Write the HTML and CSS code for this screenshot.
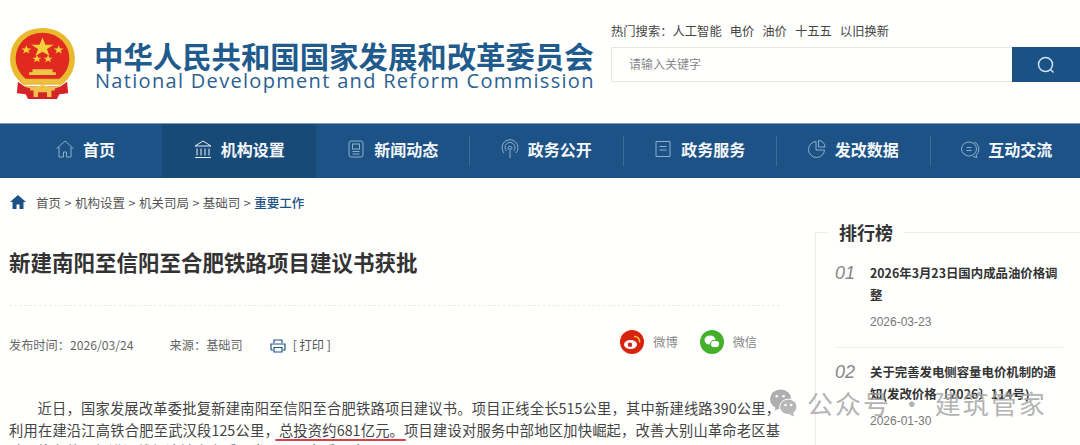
FILE: index.html
```html
<!DOCTYPE html>
<html lang="zh-CN">
<head>
<meta charset="utf-8">
<title>新建南阳至信阳至合肥铁路项目建议书获批</title>
<link rel="stylesheet" href="styles.css">
</head>
<body>
<header class="top">
  <div class="brand">
    <svg class="emblem" viewBox="0 0 60 76" preserveAspectRatio="none">
      <path d="M30 1C12 1 1 16 1 33c0 12 5 21 12 27h34c7-6 12-15 12-27C59 16 48 1 30 1z" fill="#e9b92e"/>
      <path d="M30 6C16 6 6 18 6 33c0 9 4 16 9 21h30c5-5 9-12 9-21C54 18 44 6 30 6z" fill="#e02a20"/>
      <polygon points="30,11 32.6,18.4 40,18.4 34,23 36.2,30 30,25.800 23.8,30 26,23 20,18.400 27.4,18.400" fill="#f3d03a"/>
      <polygon points="15.500,19 16.700,22.300 20,22.300 17.300,24.400 18.300,27.700 15.500,25.700 12.700,27.700 13.700,24.400 11,22.300 14.300,22.300" fill="#f3d03a"/>
      <polygon points="44.500,19 45.700,22.300 49,22.300 46.300,24.400 47.300,27.700 44.500,25.700 41.700,27.700 42.700,24.400 40,22.300 43.300,22.300" fill="#f3d03a"/>
      <polygon points="25,29 26.100,32 29,32 26.700,33.900 27.600,36.800 25,35 22.400,36.800 23.300,33.900 21,32 23.900,32" fill="#f3d03a"/>
      <polygon points="35,29 36.100,32 39,32 36.700,33.900 37.600,36.800 35,35 32.400,36.800 33.300,33.900 31,32 33.900,32" fill="#f3d03a"/>
      <path d="M21 44h18v3h3v3H18v-3h3z" fill="#f0c64a"/>
      <path d="M10 53c6 2 14 3 20 2 6 1 14 0 20-2l-2 5H12z" fill="#ecc045"/>
      <path d="M8 57l6 5h32l6-5 1 12-8 1-2 5H17l-2-5-8-1z" fill="#d5232a"/>
      <path d="M19 63h22v3h-3v7h-4v-5h-8v5h-4v-7h-3z" fill="#efc24a"/>
      <path d="M14 60c4 3 10 3 16 0 6 3 12 3 16 0v2c-5 3-11 3-16 1-5 2-11 2-16-1z" fill="#efc24a"/>
    </svg>
    <div class="brand-text">
      <div class="brand-cn">中华人民共和国国家发展和改革委员会</div>
      <div class="brand-en">National Development and Reform Commission</div>
    </div>
  </div>
  <div class="search-area">
    <div class="hot"><span>热门搜索：</span><a>人工智能</a><a>电价</a><a>油价</a><a>十五五</a><a>以旧换新</a></div>
    <div class="search">
      <div class="search-input">请输入关键字</div>
      <div class="search-btn">
        <svg viewBox="0 0 20 20" class="search-icon"><circle cx="9.500" cy="9.500" r="7" /><path d="M14.500 14.500l3 3"/></svg>
      </div>
    </div>
  </div>
</header>

<nav class="nav">
  <a class="nav-item first"><svg class="nav-icon" viewBox="0 0 20 20"><path d="M1.500 9.500L10 2l8.500 7.500M4 8v10h4.500v-5h3v5H16V8"/></svg>首页</a>
  <a class="nav-item active"><svg class="nav-icon bright" viewBox="0 0 20 20"><path d="M2 7l8-5 8 5zM4 9.500v7M8 9.500v7M12 9.500v7M16 9.500v7M2 18.500h16"/></svg>机构设置</a>
  <a class="nav-item"><svg class="nav-icon" viewBox="0 0 20 20"><rect x="3" y="2" width="14" height="16" rx="2"/><rect x="6.500" y="5" width="7" height="5"/><path d="M6.500 12.500h7M6.500 15h7"/></svg>新闻动态</a>
  <a class="nav-item"><svg class="nav-icon" viewBox="0 0 20 20"><path d="M4 14A8 8 0 1 1 16 14M6.500 12A5 5 0 1 1 13.500 12M8.500 10.500a2 2 0 1 1 3 0M10 9v10"/></svg>政务公开</a>
  <a class="nav-item"><svg class="nav-icon" viewBox="0 0 20 20"><path d="M3 2.500h14v15H3zM6.500 7.500h7M6.500 11h7"/></svg>政务服务</a>
  <a class="nav-item"><svg class="nav-icon" viewBox="0 0 20 20"><path d="M9 2.500a8 8 0 1 0 8.500 8.500H9zM11.500 1.500v6.500H18a6.500 6.500 0 0 0-6.500-6.500z"/></svg>发改数据</a>
  <a class="nav-item"><svg class="nav-icon" viewBox="0 0 20 20"><ellipse cx="9" cy="10" rx="7.500" ry="7"/><path d="M14 3a7.500 7.500 0 0 1 2 13l1 2.500-4-1M6.500 8.500h5M6.500 11.500h5"/></svg>互动交流</a>
</nav>

<div class="crumbs">
  <svg class="crumb-home" viewBox="0 0 16 14"><path d="M8 0L0 7h2.500v7h4V9.500h3V14h4V7H16z"/></svg>
  <span>首页 &gt; 机构设置 &gt; 机关司局 &gt; 基础司 &gt; </span><b>重要工作</b>
</div>

<main class="page">
  <article class="article">
    <h1 class="headline">新建南阳至信阳至合肥铁路项目建议书获批</h1>
    <div class="meta">
      <div class="meta-left">
        <span>发布时间：2026/03/24</span>
        <span class="source">来源：基础司</span>
        <svg class="print" viewBox="0 0 16 14"><path d="M4 4V1h8v3M1 11V5h14v6h-2M3 11H1M4 8.500h8v4.500H4z"/></svg>
        <span class="print-text">[ 打印 ]</span>
      </div>
      <div class="share">
        <span class="share-item"><svg class="share-icon" viewBox="0 0 24 24"><circle cx="12" cy="12" r="12" fill="#d9230f"/><ellipse cx="10.500" cy="14.500" rx="6.500" ry="4.500" fill="#fff"/><circle cx="10" cy="14.800" r="2.200" fill="#d9230f"/><path d="M14 6.500a5 5 0 0 1 5.500 6" fill="none" stroke="#f4c84a" stroke-width="1.500"/></svg>微博</span>
        <span class="share-item"><svg class="share-icon" viewBox="0 0 24 24"><circle cx="12" cy="12" r="12" fill="#43b02a"/><ellipse cx="10" cy="10" rx="5.500" ry="4.500" fill="#fff"/><ellipse cx="15" cy="14" rx="4.500" ry="3.700" fill="#fff" stroke="#43b02a"/></svg>微信</span>
      </div>
    </div>
    <div class="body">
      <p class="para">近日，国家发展改革委批复新建南阳至信阳至合肥铁路项目建议书。项目正线全长515公里，其中新建线路390公里，利用在建沿江高铁合肥至武汉段125公里，<span class="mark">总投资约681亿元。</span>项目建设对服务中部地区加快崛起，改善大别山革命老区基础设施条件，促进沿线经济社会高质量发展，具有重要意义。</p>
    </div>
  </article>

  <aside class="side">
    <h2 class="side-title">排行榜</h2>
    <div class="rank">
      <div class="rank-no">01</div>
      <div class="rank-main">
        <div class="rank-title">2026年3月23日国内成品油价格调整</div>
        <div class="rank-date">2026-03-23</div>
      </div>
    </div>
    <div class="rank">
      <div class="rank-no">02</div>
      <div class="rank-main">
        <div class="rank-title">关于完善发电侧容量电价机制的通知(发改价格〔2026〕114号)</div>
        <div class="rank-date">2026-01-30</div>
      </div>
    </div>
  </aside>
</main>

<div class="watermark">
  <svg class="wm-icon" viewBox="0 0 28 30"><ellipse cx="11" cy="11" rx="11" ry="10" fill="#9d9d9d"/><path d="M6 18l-1 5 6-3z" fill="#9d9d9d"/><ellipse cx="19" cy="19" rx="9" ry="8" fill="#a8a8a8" stroke="#fff"/><path d="M24 25l1 4-5-2z" fill="#a8a8a8"/><circle cx="16" cy="17" r="1.300" fill="#fff"/><circle cx="22" cy="17" r="1.300" fill="#fff"/><circle cx="7" cy="8" r="1.400" fill="#fff"/><circle cx="14" cy="8" r="1.400" fill="#fff"/></svg>
  <span>公众号 · 建筑管家</span>
</div>
```

FILE: styles.css
```css
* { box-sizing: border-box; }
html, body { margin: 0; padding: 0; }
body {
  width: 1080px;
  height: 445px;
  overflow: hidden;
  position: relative;
  background: #fffffe;
  color: #555;
  font-family: "Microsoft YaHei", "Noto Sans CJK SC", "Liberation Sans", sans-serif;
  font-size: 12px;
}
svg { display: block; flex: none; }

.top {
  height: 123px;
  display: flex;
  justify-content: space-between;
}
.brand { display: flex; padding: 27px 0 0 9px; }
.emblem { width: 67px; height: 73px; }
.brand-text { margin-left: 18px; padding-top: 10px; }
.brand-cn {
  font-size: 29.4px;
  line-height: 36px;
  font-weight: 700;
  color: #1f5b8d;
  white-space: nowrap;
}
.brand-en {
  margin-top: -3px;
  padding-left: 1px;
  font-family: "Open Sans", "Liberation Sans", sans-serif;
  font-size: 20px;
  line-height: 22px;
  letter-spacing: 1.31px;
  color: #2a6191;
  white-space: nowrap;
}
.search-area { width: 469px; padding-top: 18px; }
.hot {
  height: 26px;
  margin-bottom: 3px;
  display: flex;
  align-items: center;
  font-size: 12.300px;
  color: #444;
  white-space: nowrap;
}
.hot a { margin-right: 8px; }
.search { display: flex; height: 35px; }
.search-input {
  width: 401px;
  border: 1px solid #e6e6e6;
  border-right: 0;
  border-radius: 2px 0 0 2px;
  padding-left: 17px;
  line-height: 31px;
  color: #888;
}
.search-btn {
  width: 68px;
  background: #1b5285;
  display: flex;
  align-items: center;
  justify-content: center;
}
.search-icon { width: 20px; height: 20px; fill: none; stroke: #cfe3f2; stroke-width: 1.5; }

.nav {
  height: 55px;
  display: flex;
  background: #1c5285;
  border-top: 1px solid #7b9db8;
}
.nav-item {
  flex: 0 0 153.500px;
  display: flex;
  align-items: center;
  justify-content: center;
  gap: 8px;
  position: relative;
  padding-bottom: 5px;
  color: #f4f7fa;
  font-size: 16px;
  font-weight: 700;
  white-space: nowrap;
}
.nav-item.first { flex-basis: 162px; padding-left: 8px; }
.nav-item + .nav-item::before {
  content: "";
  position: absolute;
  left: 0;
  top: 12px;
  bottom: 12px;
  width: 1px;
  background: #3c6c98;
}
.nav-item.active { background: #184a78; }
.nav-item.active::before, .nav-item.active + .nav-item::before { display: none; }
.nav-icon { width: 20px; height: 20px; fill: none; stroke: #8fb0cb; stroke-width: 1; }
.nav-icon.bright { stroke: #e8eff5; }

.crumbs {
  display: flex;
  align-items: center;
  height: 18px;
  margin-top: 15px;
  padding-left: 10px;
  font-size: 12.500px;
  word-spacing: .7px;
  color: #555;
  white-space: pre;
}
.crumb-home { width: 16px; height: 14px; fill: #1c5285; margin-right: 10px; }
.crumbs b { font-weight: 500; color: #1c5285; }

.page {
  display: flex;
  padding-left: 9px;
  margin-top: 20px;
}
.article { width: 771px; }
.headline {
  margin: 0;
  padding: 11px 0 0;
  height: 75px;
  font-size: 21.500px;
  line-height: 39px;
  font-weight: 700;
  color: #333;
  border-bottom: 1px dashed #ebebeb;
  white-space: nowrap;
}
.meta {
  display: flex;
  justify-content: space-between;
  height: 91px;
  padding-top: 24px;
  font-size: 12.200px;
}
.meta-left { display: flex; align-items: flex-start; height: 30px; padding-top: 6px; color: #666; white-space: nowrap; }
.source { margin-left: 36px; }
.print { width: 16px; height: 14px; margin: 3px 7px 0 27px; fill: none; stroke: #1c5285; stroke-width: 1.200; }
.print-text { color: #555; }
.share { display: flex; gap: 22px; padding-right: 23px; }
.share-item { display: flex; align-items: center; gap: 9px; height: 24px; color: #888; white-space: nowrap; }
.share-icon { width: 24px; height: 24px; }
.body { font-size: 14.260px; line-height: 21.500px; color: #444; }
.para { margin: 0; text-indent: 2em; text-align: justify; }
.mark { position: relative; }
.mark::after {
  content: "";
  position: absolute;
  left: -4px;
  right: -2px;
  bottom: -1px;
  height: 2px;
  border-radius: 1px;
  background: #d8404a;
}

.side {
  position: relative;
  margin-left: 35px;
  margin-top: 1px;
  width: 265px;
  height: 300px;
  border-left: 1px solid #eee;
  border-top: 1px solid #eee;
  padding-left: 19px;
}
.side-title {
  position: absolute;
  left: 13px;
  top: -14px;
  margin: 0;
  padding: 0 10px;
  background: #fffffe;
  font-size: 18px;
  line-height: 26px;
  font-weight: 700;
  color: #333;
}
.rank {
  display: flex;
  width: 228px;
  padding: 29px 0 16px;
  border-bottom: 1px solid #eee;
}
.rank + .rank { border-bottom: 0; padding-top: 13px; }
.rank-no {
  width: 35px;
  flex: none;
  font-family: "Liberation Sans", sans-serif;
  font-style: italic;
  font-size: 18px;
  line-height: 22px;
  color: #888;
}
.rank-title {
  font-size: 12.400px;
  font-weight: 700;
  line-height: 22px;
  color: #333;
}
.rank-date {
  margin-top: 7px;
  font-family: "Liberation Sans", sans-serif;
  font-size: 12px;
  line-height: 18px;
  color: #777;
}

.watermark {
  position: absolute;
  left: 770px;
  top: 388px;
  display: flex;
  align-items: center;
  gap: 10px;
  opacity: .82;
  color: #a3a3a3;
  font-size: 26px;
  line-height: 30px;
  letter-spacing: 2px;
  white-space: nowrap;
}
.wm-icon { width: 27px; height: 30px; }
```
